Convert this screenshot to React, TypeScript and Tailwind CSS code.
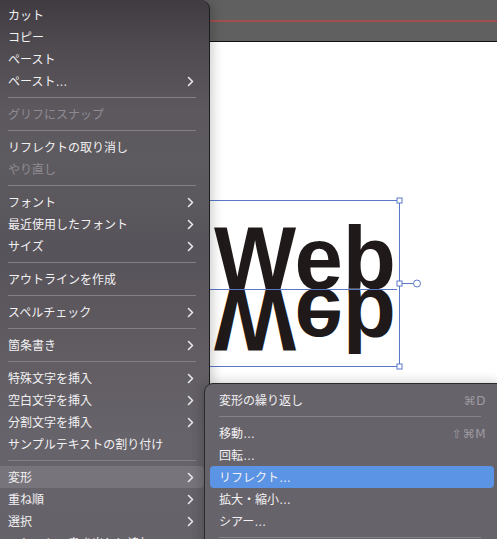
import React from 'react';

type Row =
  | { kind: 'item'; label: string; sub?: boolean; disabled?: boolean; active?: boolean; keys?: string }
  | { kind: 'sep' };

const item = (label: string, opts: Partial<Omit<Extract<Row, { kind: 'item' }>, 'kind' | 'label'>> = {}): Row => ({
  kind: 'item',
  label,
  ...opts,
});
const sep: Row = { kind: 'sep' };

const mainRows: Row[] = [
  item('カット'),
  item('コピー'),
  item('ペースト'),
  item('ペースト…', { sub: true }),
  sep,
  item('グリフにスナップ', { disabled: true }),
  sep,
  item('リフレクトの取り消し'),
  item('やり直し', { disabled: true }),
  sep,
  item('フォント', { sub: true }),
  item('最近使用したフォント', { sub: true }),
  item('サイズ', { sub: true }),
  sep,
  item('アウトラインを作成'),
  sep,
  item('スペルチェック', { sub: true }),
  sep,
  item('箇条書き', { sub: true }),
  sep,
  item('特殊文字を挿入', { sub: true }),
  item('空白文字を挿入', { sub: true }),
  item('分割文字を挿入', { sub: true }),
  item('サンプルテキストの割り付け'),
  sep,
  item('変形', { sub: true, active: true }),
  item('重ね順', { sub: true }),
  item('選択', { sub: true }),
  item('アセットの書き出しに追加'),
];

const subRows: Row[] = [
  item('変形の繰り返し', { keys: '⌘D' }),
  sep,
  item('移動…', { keys: '⇧⌘M' }),
  item('回転…'),
  item('リフレクト…', { active: true }),
  item('拡大・縮小…'),
  item('シアー…'),
  sep,
  item('個別に変形…'),
];

function Chevron() {
  return (
    <svg width="7" height="11" viewBox="0 0 7 11" className="shrink-0">
      <path d="M1.5 1.5 L5.5 5.5 L1.5 9.5" fill="none" stroke="#e9e8ea" strokeWidth="1.6" strokeLinecap="round" strokeLinejoin="round" />
    </svg>
  );
}

function MainMenu() {
  return (
    <div className="absolute left-0 top-0 h-[580px] w-[210px] rounded-tr-[9px] border-r border-[#1d1c1e] bg-[linear-gradient(180deg,#3f3b41_0%,#4e4a50_8%,#5c585e_19%,#5e5b60_28%,#57535a_43%,#5b575d_52%,#615d63_62%,#67636a_75%,#666269_100%)] pt-[4px] shadow-[2px_0_12px_rgba(0,0,0,0.22)]">
      {mainRows.map((r, i) =>
        r.kind === 'sep' ? (
          <div key={i} className="flex h-[11px] items-center pl-[8px] pr-[13px]">
            <div className="h-px w-full bg-[#837f86]" />
          </div>
        ) : (
          <div
            key={i}
            className={`mr-[5px] flex h-[22px] items-center justify-between rounded-r-[4px] pl-[8px] pr-[10px] text-[12px] leading-none ${
              r.active ? 'bg-[#78747b]' : ''
            } ${r.disabled ? 'text-[#8f8b92]' : 'text-[#f2f1f3]'}`}
          >
            <span className="pt-px">{r.label}</span>
            {r.sub && <Chevron />}
          </div>
        )
      )}
    </div>
  );
}

function SubMenu() {
  return (
    <div className="absolute left-[204px] top-[383px] w-[296px] rounded-tl-[9px] border border-[#2b292c] bg-[#67636a] pb-[6px] pt-[5px] shadow-[0_2px_14px_rgba(0,0,0,0.3)]">
      {subRows.map((r, i) =>
        r.kind === 'sep' ? (
          <div key={i} className="flex h-[11px] items-center pl-[14px] pr-[18px]">
            <div className="h-px w-full bg-[#858188]" />
          </div>
        ) : (
          <div
            key={i}
            className={`mx-[5px] flex h-[22px] items-center justify-between rounded-[4px] pl-[9px] pr-[8px] text-[12px] leading-none text-[#f2f1f3] ${
              r.active ? 'bg-[#5b94e4]' : ''
            }`}
          >
            <span className="pt-px">{r.label}</span>
            {r.keys && (
              <span className="pt-px font-['DejaVu_Sans','Liberation_Sans',sans-serif] text-[12px] tracking-[0.5px] text-[#9e9aa1]">
                {r.keys}
              </span>
            )}
          </div>
        )
      )}
    </div>
  );
}

function Artwork() {
  const blue = '#5b78c8';
  return (
    <svg className="absolute left-0 top-0" width="497" height="539" viewBox="0 0 497 539">
      <text
        x="214"
        y="289"
        fontFamily="'Liberation Sans', Arial, sans-serif"
        fontWeight="700"
        fontSize="89"
        fill="#1f1a19"
        textLength="182"
        lengthAdjust="spacingAndGlyphs"
      >
        Web
      </text>
      <g transform="translate(0 578) scale(1 -1)">
        <text
          x="214"
          y="289"
          fontFamily="'Liberation Sans', Arial, sans-serif"
          fontWeight="700"
          fontSize="89"
          fill="#1f1a19"
          textLength="182"
          lengthAdjust="spacingAndGlyphs"
        >
          Web
        </text>
      </g>
      <g stroke={blue} strokeWidth="1" fill="none">
        <line x1="150" y1="200.5" x2="399.5" y2="200.5" />
        <line x1="150" y1="366.5" x2="399.5" y2="366.5" />
        <line x1="150" y1="289.5" x2="397" y2="289.5" />
        <line x1="399.5" y1="200.5" x2="399.5" y2="366.5" />
        <line x1="402" y1="283.5" x2="413.5" y2="283.5" />
      </g>
      <g stroke={blue} strokeWidth="1" fill="#ffffff">
        <rect x="397" y="198" width="5" height="5" />
        <rect x="397" y="281" width="5" height="5" />
        <rect x="397" y="364" width="5" height="5" />
        <circle cx="417" cy="283.5" r="3.5" />
      </g>
    </svg>
  );
}

export default function App() {
  return (
    <div className="relative h-[539px] w-[497px] overflow-hidden bg-white font-['Liberation_Sans','Noto_Sans_CJK_JP',sans-serif]">
      <div className="flex h-full flex-col">
        <div className="h-[41px] bg-[#606060] pt-[20px]">
          <div className="h-[2px] bg-[#a44f4f]" />
        </div>
        <div className="h-px bg-[#111111]" />
        <div className="flex-1 bg-white" />
      </div>
      <Artwork />
      <MainMenu />
      <SubMenu />
    </div>
  );
}
